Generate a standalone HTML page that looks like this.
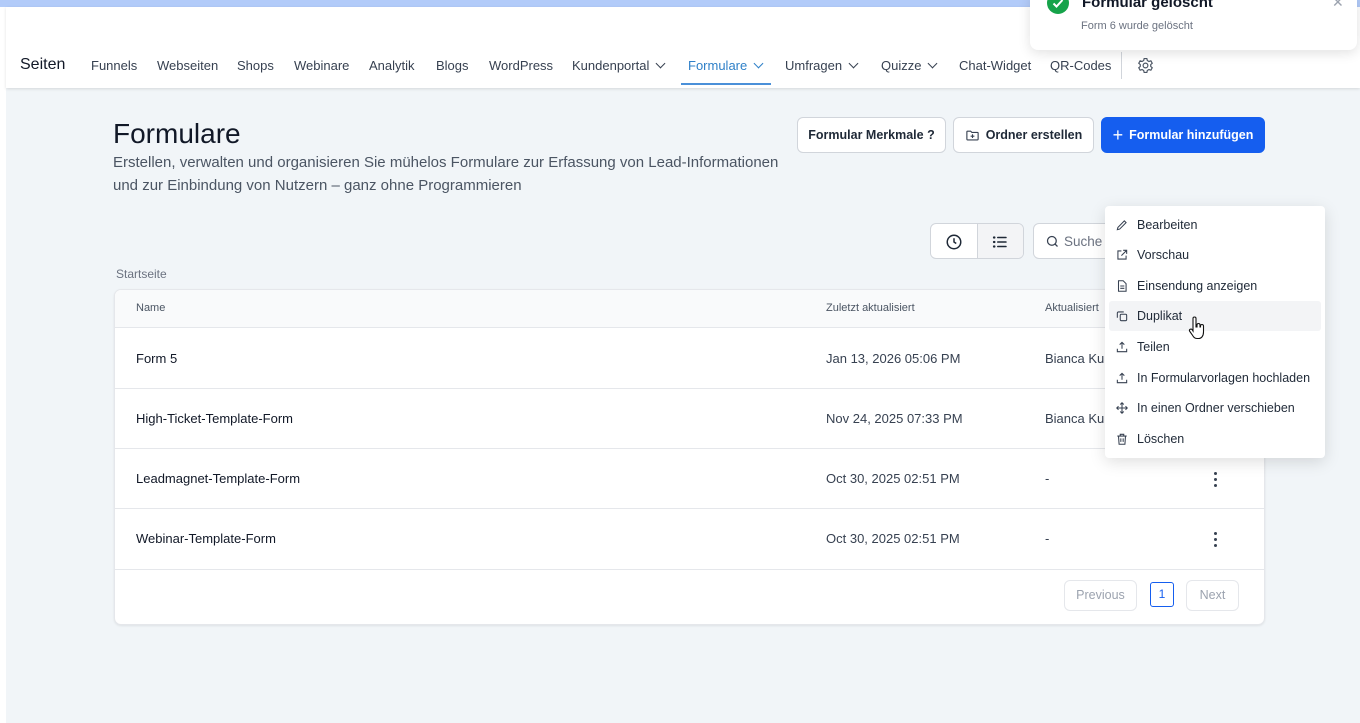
<!DOCTYPE html>
<html><head><meta charset="utf-8"><style>
*{box-sizing:border-box;margin:0;padding:0}
body{width:1360px;height:723px;overflow:hidden;background:#f1f5f8;font-family:"Liberation Sans",sans-serif;position:relative;color:#111827}
.abs{position:absolute}
.topbar{left:0;top:0;width:1360px;height:7px;background:#b2cbf9}
.hdr{left:6px;top:7px;width:1354px;height:81px;background:#fff;box-shadow:0 1px 3px rgba(0,0,0,.12)}
.lw{left:0;top:7px;width:6px;height:716px;background:#fff}
.nav{position:absolute;top:58px;font-size:13px;color:#374151;white-space:nowrap}
.chev{display:inline-block;width:7px;height:7px;border-right:1.5px solid #374151;border-bottom:1.5px solid #374151;transform:rotate(45deg);margin-left:8px;position:relative;top:-3px}
.btn{position:absolute;top:117px;height:36px;border:1px solid #d1d5db;border-radius:6px;background:#fff;font-size:12.5px;font-weight:bold;color:#1f2937;display:flex;align-items:center;justify-content:center;gap:6px}
.card{left:114px;top:289px;width:1151px;height:336px;background:#fff;border:1px solid #e5e7eb;border-radius:7px;box-shadow:0 1px 2px rgba(0,0,0,.08);overflow:hidden}
.row{position:absolute;left:0;width:1151px;border-bottom:1px solid #e5e7eb;font-size:13px}
.row span{position:absolute}
.menu{left:1105px;top:206px;width:220px;height:252px;background:#fff;border-radius:4px;box-shadow:0 4px 16px rgba(0,0,0,.13)}
.mi{position:absolute;left:4px;width:212px;height:30px;font-size:12.5px;color:#1f2937;display:flex;align-items:center;padding-left:28px}
.mi svg{position:absolute;left:6px;top:8px}
.dots{position:absolute;left:1099px;width:4px}
.dots i{display:block;width:3px;height:3px;background:#374151;border-radius:50%;margin-bottom:3px}
</style></head><body>
<div class="abs topbar"></div>
<div class="abs lw"></div>
<div class="abs hdr"></div>
<div class="nav" style="left:20px;top:56px;font-size:16px;color:#111827">Seiten</div>
<div class="nav" style="left:91px">Funnels</div>
<div class="nav" style="left:157px">Webseiten</div>
<div class="nav" style="left:237px">Shops</div>
<div class="nav" style="left:294px">Webinare</div>
<div class="nav" style="left:369px">Analytik</div>
<div class="nav" style="left:436px">Blogs</div>
<div class="nav" style="left:489px">WordPress</div>
<div class="nav" style="left:572px">Kundenportal<span class="chev"></span></div>
<div class="nav" style="left:688px;color:#2f80c8">Formulare<span class="chev" style="border-color:#2f80c8"></span></div>
<div class="abs" style="left:681px;top:83px;width:90px;height:2px;background:#4a90d9"></div>
<div class="nav" style="left:785px">Umfragen<span class="chev"></span></div>
<div class="nav" style="left:881px">Quizze<span class="chev"></span></div>
<div class="nav" style="left:959px">Chat-Widget</div>
<div class="nav" style="left:1050px">QR-Codes</div>
<div class="abs" style="left:1121px;top:52px;width:1px;height:27px;background:#d1d5db"></div>
<svg class="abs" style="left:1136px;top:56px" width="19" height="19" viewBox="0 0 24 24" fill="none" stroke="#4b5563" stroke-width="1.5"><path d="M10.3 3.2h3.4l.6 2.5 2 1.2 2.5-.8 1.7 3-1.9 1.8v2.2l1.9 1.8-1.7 3-2.5-.8-2 1.2-.6 2.5h-3.4l-.6-2.5-2-1.2-2.5.8-1.7-3 1.9-1.8v-2.2L3.5 9.1l1.7-3 2.5.8 2-1.2z"/><circle cx="12" cy="12" r="3"/></svg>

<div class="abs" style="left:1030px;top:-10px;width:327px;height:60px;background:#fff;border-radius:8px;box-shadow:0 3px 12px rgba(0,0,0,.12)"></div>
<svg class="abs" style="left:1047px;top:-8px" width="22" height="22" viewBox="0 0 22 22"><circle cx="11" cy="11" r="11" fill="#16a34a"/><path d="M6.5 11.5l3 3 6-6.5" fill="none" stroke="#fff" stroke-width="2"/></svg>
<div class="abs" style="left:1082px;top:-6px;font-size:15px;font-weight:bold;color:#111827">Formular gelöscht</div>
<div class="abs" style="left:1081px;top:20px;font-size:11px;color:#6b7280">Form 6 wurde gelöscht</div>
<div class="abs" style="left:1332px;top:-6px;font-size:14px;color:#9ca3af">✕</div>

<div class="abs" style="left:113px;top:118px;font-size:28px;color:#111827">Formulare</div>
<div class="abs" style="left:113px;top:151px;font-size:15px;color:#4b5563;line-height:23px;width:720px">Erstellen, verwalten und organisieren Sie mühelos Formulare zur Erfassung von Lead-Informationen<br>und zur Einbindung von Nutzern – ganz ohne Programmieren</div>

<div class="btn" style="left:797px;width:149px">Formular Merkmale ?</div>
<div class="btn" style="left:953px;width:141px"><svg width="15" height="15" viewBox="0 0 24 24" fill="none" stroke="#374151" stroke-width="1.8"><path d="M3 6a1 1 0 011-1h5l2 2h9a1 1 0 011 1v10a1 1 0 01-1 1H4a1 1 0 01-1-1z"/><path d="M12 10v6M9 13h6"/></svg>Ordner erstellen</div>
<div class="btn" style="left:1101px;width:164px;background:#155eef;border-color:#155eef;color:#fff"><span style="font-size:18px;font-weight:normal">+</span>Formular hinzufügen</div>

<div class="abs" style="left:930px;top:223px;width:94px;height:36px;border:1px solid #d1d5db;border-radius:6px;background:#fff;overflow:hidden"><div style="position:absolute;left:46px;top:0;width:47px;height:36px;background:#f3f4f6;border-left:1px solid #d1d5db"></div>
<svg style="position:absolute;left:14px;top:9px" width="18" height="18" viewBox="0 0 24 24" fill="none" stroke="#1f2937" stroke-width="2"><circle cx="12" cy="12" r="9"/><path d="M12 7v5l3 2"/></svg>
<svg style="position:absolute;left:60px;top:9px" width="18" height="18" viewBox="0 0 24 24" fill="none" stroke="#1f2937" stroke-width="2" stroke-linecap="round"><path d="M9 6h11M9 12h11M9 18h11"/><path d="M4 6h.5M4 12h.5M4 18h.5" stroke-width="3"/></svg></div>
<div class="abs" style="left:1033px;top:223px;width:100px;height:36px;border:1px solid #d1d5db;border-radius:6px;background:#fff"><svg style="position:absolute;left:11px;top:10px" width="15" height="15" viewBox="0 0 24 24" fill="none" stroke="#374151" stroke-width="2"><circle cx="11" cy="11" r="7"/><path d="M16 16l4 4"/></svg><span style="position:absolute;left:30px;top:10px;font-size:13.5px;color:#6b7280">Suche n</span></div>

<div class="abs" style="left:116px;top:267px;font-size:12px;color:#6b7280">Startseite</div>

<div class="abs card">
<div class="row" style="top:0;height:38px;background:#f9fafb;font-size:11px;color:#4b5563"><span style="left:21px;top:12px">Name</span><span style="left:711px;top:12px">Zuletzt aktualisiert</span><span style="left:930px;top:12px">Aktualisiert</span></div>
<div class="row" style="top:38px;height:61px"><span style="left:21px;top:23px">Form 5</span><span style="left:711px;top:23px;color:#374151">Jan 13, 2026 05:06 PM</span><span style="left:930px;top:23px;color:#374151">Bianca Ku</span></div>
<div class="row" style="top:99px;height:60px"><span style="left:21px;top:22px">High-Ticket-Template-Form</span><span style="left:711px;top:22px;color:#374151">Nov 24, 2025 07:33 PM</span><span style="left:930px;top:22px;color:#374151">Bianca Ku</span></div>
<div class="row" style="top:159px;height:60px"><span style="left:21px;top:22px">Leadmagnet-Template-Form</span><span style="left:711px;top:22px;color:#374151">Oct 30, 2025 02:51 PM</span><span style="left:930px;top:22px;color:#374151">-</span><div class="dots" style="top:23px"><i></i><i></i><i></i></div></div>
<div class="row" style="top:219px;height:61px"><span style="left:21px;top:22px">Webinar-Template-Form</span><span style="left:711px;top:22px;color:#374151">Oct 30, 2025 02:51 PM</span><span style="left:930px;top:22px;color:#374151">-</span><div class="dots" style="top:23px"><i></i><i></i><i></i></div></div>
<div style="position:absolute;left:949px;top:290px;width:73px;height:31px;border:1px solid #e5e7eb;border-radius:6px;font-size:12.5px;color:#9ca3af;text-align:center;line-height:29px">Previous</div>
<div style="position:absolute;left:1035px;top:292px;width:24px;height:25px;border:1px solid #155eef;border-radius:3px;font-size:12px;color:#155eef;text-align:center;line-height:23px">1</div>
<div style="position:absolute;left:1071px;top:290px;width:53px;height:31px;border:1px solid #e5e7eb;border-radius:6px;font-size:12.5px;color:#9ca3af;text-align:center;line-height:29px">Next</div>
</div>

<div class="abs menu">
<div class="mi" style="top:4px"><svg width="14" height="14" viewBox="0 0 24 24" fill="none" stroke="#374151" stroke-width="1.8"><path d="M4 20l1-4L16 5l3 3L8 19z"/></svg>Bearbeiten</div>
<div class="mi" style="top:34px"><svg width="14" height="14" viewBox="0 0 24 24" fill="none" stroke="#374151" stroke-width="1.8"><path d="M11 5H5v14h14v-6M14 4h6v6M20 4l-9 9"/></svg>Vorschau</div>
<div class="mi" style="top:65px"><svg width="14" height="14" viewBox="0 0 24 24" fill="none" stroke="#374151" stroke-width="1.8"><path d="M6 3h8l5 5v13H6zM9 12h7M9 16h7"/></svg>Einsendung anzeigen</div>
<div class="mi" style="top:95px;background:#f3f4f6;border-radius:3px"><svg width="14" height="14" viewBox="0 0 24 24" fill="none" stroke="#374151" stroke-width="1.8"><rect x="9" y="9" width="11" height="11" rx="2"/><path d="M15 5H6a2 2 0 00-2 2v8"/></svg>Duplikat</div>
<div class="mi" style="top:126px"><svg width="14" height="14" viewBox="0 0 24 24" fill="none" stroke="#374151" stroke-width="1.8"><path d="M4 15v5h16v-5M12 15V4M8 8l4-4 4 4"/></svg>Teilen</div>
<div class="mi" style="top:157px"><svg width="14" height="14" viewBox="0 0 24 24" fill="none" stroke="#374151" stroke-width="1.8"><path d="M4 15v5h16v-5M12 15V4M8 8l4-4 4 4"/></svg>In Formularvorlagen hochladen</div>
<div class="mi" style="top:187px"><svg width="14" height="14" viewBox="0 0 24 24" fill="none" stroke="#374151" stroke-width="1.8"><path d="M12 3v18M3 12h18M9 6l3-3 3 3M9 18l3 3 3-3M6 9l-3 3 3 3M18 9l3 3-3 3"/></svg>In einen Ordner verschieben</div>
<div class="mi" style="top:218px"><svg width="14" height="14" viewBox="0 0 24 24" fill="none" stroke="#374151" stroke-width="1.8"><path d="M4 7h16M9 7V4h6v3M6 7l1 14h10l1-14M10 11v6M14 11v6"/></svg>Löschen</div>
</div>
<svg class="abs" style="left:1188px;top:316px" width="18" height="24" viewBox="0 0 18 24"><path d="M5 2.5a1.5 1.5 0 013 0V11h1V9a1.5 1.5 0 013 0v2h.5v-1a1.5 1.5 0 013 0v6c0 4-2 6.5-5 6.5H9c-2.5 0-3.5-1.5-5-4L1.5 15a1.5 1.5 0 012.5-1.5L5 15z" fill="#fff" stroke="#111" stroke-width="1.1"/></svg>
</body></html>
